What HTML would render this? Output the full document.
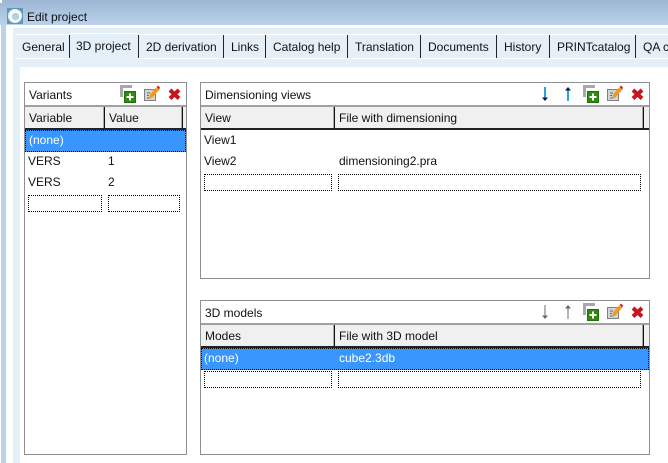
<!DOCTYPE html>
<html><head><meta charset="utf-8">
<style>
html,body{margin:0;padding:0;background:#fff}
#r{position:relative;width:668px;height:463px;overflow:hidden;background:#fff;font:12px/14px "Liberation Sans",sans-serif;color:#111}
#r div{position:absolute;box-sizing:border-box}
.t{white-space:nowrap}
.w{color:#fff}
.box{border:1px solid #8f8f96;background:#fff}
.hl{height:2px;background:#a0a0a0}
.ch{background:#f0f0f0;height:21px}
.bl{height:2px;background:#222}
.sep{width:1px;background:#111;height:21px;box-shadow:-1px 0 #a8a8a8}
.sel{background:#3996ff;border:1px dotted #000;height:22px}
.dot{border:1px dotted #000;height:17px}
svg{position:absolute}
.tab{top:34px;height:25px;background:#e4eff7;border-top:1px solid #fff;border-bottom:1px solid #fff}
.s{top:35px;width:1px;height:23px;background:#222}
</style></head><body><div id="r">
<div style="left:0;top:0;width:668px;height:25px;background:linear-gradient(#9cb6d4,#bad2ec)"></div>
<div style="left:0;top:0;width:2px;height:3px;background:#fff"></div>
<div style="left:0;top:25px;width:1px;height:438px;background:#fff"></div>
<div style="left:1px;top:25px;width:5px;height:438px;background:#bcd2ea"></div>
<div style="left:6px;top:25px;width:662px;height:438px;background:#fff"></div>
<div style="left:13px;top:28px;width:655px;height:435px;background:#e4eff7"></div>
<div style="left:20px;top:67px;width:648px;height:396px;background:#fff"></div>

<svg style="left:7px;top:8px" width="16" height="16" viewBox="0 0 16 16"><rect width="16" height="16" fill="#5b9bb8"/><circle cx="8" cy="8" r="7" fill="#eef4f8"/><circle cx="8.500" cy="8.500" r="4.500" fill="#b4d0e0" stroke="#fff" stroke-width="1.500"/></svg>
<div class="t" style="left:27px;top:10px">Edit project</div>

<div class="tab" style="left:15px;width:653px"></div>
<div style="left:70px;top:33px;width:68px;height:26px;background:#fff"></div>
<div style="left:70px;top:34px;width:68px;height:25px;background:#e4eff7"></div>
<div class="s" style="left:69px;top:35px;height:23px"></div>
<div class="s" style="left:138px"></div>
<div class="s" style="left:223px"></div>
<div class="s" style="left:265px"></div>
<div class="s" style="left:347px"></div>
<div class="s" style="left:420px"></div>
<div class="s" style="left:496px"></div>
<div class="s" style="left:549px"></div>
<div class="s" style="left:635px"></div>
<div class="t" style="left:22px;top:40px">General</div>
<div class="t" style="left:76px;top:39px">3D project</div>
<div class="t" style="left:146px;top:40px">2D derivation</div>
<div class="t" style="left:231px;top:40px">Links</div>
<div class="t" style="left:273px;top:40px">Catalog help</div>
<div class="t" style="left:355px;top:40px">Translation</div>
<div class="t" style="left:428px;top:40px">Documents</div>
<div class="t" style="left:504px;top:40px">History</div>
<div class="t" style="left:557px;top:40px">PRINTcatalog</div>
<div class="t" style="left:643px;top:40px">QA c</div>

<!-- Variants -->
<div class="box" style="left:24px;top:82px;width:163px;height:373px"></div>
<div class="hl" style="left:25px;top:105px;width:161px"></div>
<div class="ch" style="left:25px;top:107px;width:161px"></div>
<div class="bl" style="left:25px;top:128px;width:161px"></div>
<div class="sep" style="left:104px;top:107px"></div>
<div class="sep" style="left:182px;top:107px"></div>
<div class="t" style="left:29px;top:88px">Variants</div>
<div class="t" style="left:29px;top:111px">Variable</div>
<div class="t" style="left:109px;top:111px">Value</div>
<div class="sel" style="left:25px;top:130px;width:161px"></div>
<div class="t w" style="left:29px;top:133px">(none)</div>
<div class="t" style="left:28px;top:154px">VERS</div><div class="t" style="left:108px;top:154px">1</div>
<div class="t" style="left:28px;top:175px">VERS</div><div class="t" style="left:108px;top:175px">2</div>
<div class="dot" style="left:28px;top:195px;width:74px"></div>
<div class="dot" style="left:108px;top:195px;width:72px"></div>

<!-- Dimensioning views -->
<div class="box" style="left:200px;top:82px;width:450px;height:197px"></div>
<div class="hl" style="left:201px;top:105px;width:448px"></div>
<div class="ch" style="left:201px;top:107px;width:448px"></div>
<div class="bl" style="left:201px;top:128px;width:448px"></div>
<div class="sep" style="left:334px;top:107px"></div>
<div class="sep" style="left:643px;top:107px"></div>
<div class="t" style="left:205px;top:88px">Dimensioning views</div>
<div class="t" style="left:205px;top:111px">View</div>
<div class="t" style="left:339px;top:111px">File with dimensioning</div>
<div class="t" style="left:204px;top:133px">View1</div>
<div class="t" style="left:204px;top:154px">View2</div>
<div class="t" style="left:339px;top:154px">dimensioning2.pra</div>
<div class="dot" style="left:204px;top:174px;width:128px"></div>
<div class="dot" style="left:338px;top:174px;width:303px"></div>

<!-- 3D models -->
<div class="box" style="left:200px;top:300px;width:450px;height:155px"></div>
<div class="hl" style="left:201px;top:323px;width:448px"></div>
<div class="ch" style="left:201px;top:325px;width:448px"></div>
<div class="bl" style="left:201px;top:346px;width:448px"></div>
<div class="sep" style="left:334px;top:325px"></div>
<div class="sep" style="left:643px;top:325px"></div>
<div class="t" style="left:205px;top:306px">3D models</div>
<div class="t" style="left:205px;top:329px">Modes</div>
<div class="t" style="left:339px;top:329px">File with 3D model</div>
<div class="sel" style="left:201px;top:348px;width:448px"></div>
<div class="t w" style="left:204px;top:351px">(none)</div>
<div class="t w" style="left:339px;top:351px">cube2.3db</div>
<div class="dot" style="left:204px;top:371px;width:128px"></div>
<div class="dot" style="left:338px;top:371px;width:303px"></div>

<!-- Icons -->
<svg width="0" height="0"><defs>
<g id="add"><path d="M0 0H12V3H3V12H0Z" fill="#a8a8a8"/><rect x="4.500" y="6.500" width="11" height="11" fill="#2e8b12" stroke="#236f0a"/><path d="M9 8.500h2v2.500h2.500v2H11v2.500H9V13H6.500V11H9Z" fill="#fff"/></g>
<g id="edit"><rect x=".5" y="4.500" width="11" height="11" fill="#d4d4d4" stroke="#808080"/><path d="M3 8h3M3 10.500h2M3 13h3" stroke="#666"/><path d="M6 9.500 L12 2.500 L15 5 L8.500 12.500 L5.500 13.500Z" fill="#f39a1d"/><path d="M12.500 2 L14 .5 L16 2.500 L15 5Z" fill="#d8281e"/></g>
<g id="del"><path d="M2 2 L11 10.500 M11 2 L2 10.500" stroke="#c8141c" stroke-width="4"/></g>
</defs></svg>
<svg style="left:120px;top:85px" width="16" height="18"><use href="#add"/></svg>
<svg style="left:144px;top:85px" width="16" height="16"><use href="#edit"/></svg>
<svg style="left:168px;top:88px" width="13" height="13"><use href="#del"/></svg>

<svg style="left:540px;top:86px" width="10" height="16"><path d="M5 1V12" stroke="#2aa5dc" stroke-width="2"/><path d="M2 11.500H8L5 15Z" fill="#0a1a50"/></svg>
<svg style="left:563px;top:86px" width="10" height="16"><path d="M5 4V15" stroke="#2aa5dc" stroke-width="2"/><path d="M2 4.500H8L5 1Z" fill="#0a1a50"/></svg>
<svg style="left:583px;top:85px" width="16" height="18"><use href="#add"/></svg>
<svg style="left:607px;top:85px" width="16" height="16"><use href="#edit"/></svg>
<svg style="left:631px;top:88px" width="13" height="13"><use href="#del"/></svg>

<svg style="left:540px;top:304px" width="10" height="16"><path d="M5 1V12" stroke="#b4b4b4" stroke-width="2"/><path d="M2 11.500H8L5 15Z" fill="#666"/></svg>
<svg style="left:563px;top:304px" width="10" height="16"><path d="M5 4V15" stroke="#b4b4b4" stroke-width="2"/><path d="M2 4.500H8L5 1Z" fill="#666"/></svg>
<svg style="left:583px;top:303px" width="16" height="18"><use href="#add"/></svg>
<svg style="left:607px;top:303px" width="16" height="16"><use href="#edit"/></svg>
<svg style="left:631px;top:306px" width="13" height="13"><use href="#del"/></svg>
</div></body></html>
